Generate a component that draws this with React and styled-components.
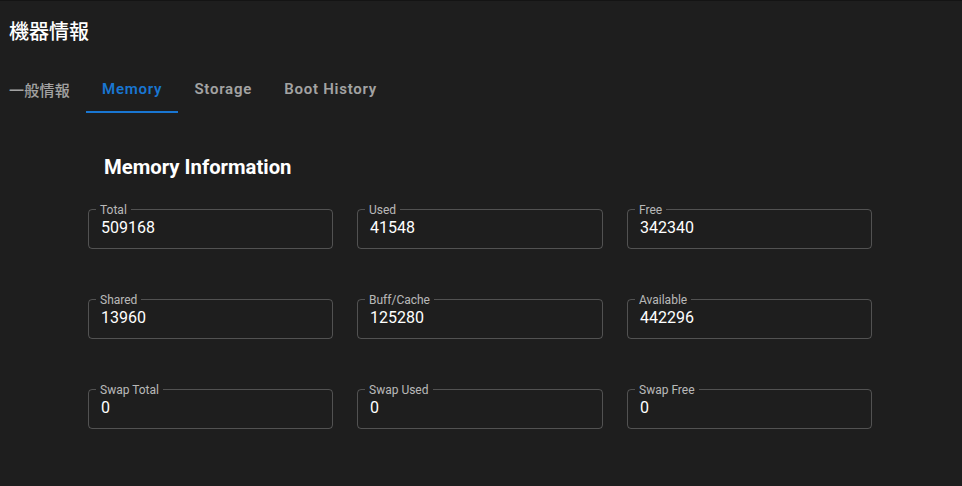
import React, { useState } from "react";
import styled, { createGlobalStyle } from "styled-components";

const GlobalStyle = createGlobalStyle`
  html, body {
    margin: 0;
    background: #1e1e1e;
  }
  body {
    font-family: Roboto, "Noto Sans CJK JP", sans-serif;
    color: #fff;
  }
  * {
    box-sizing: border-box;
  }
`;

const tabs = ["一般情報", "Memory", "Storage", "Boot History"];

const memory = [
  { label: "Total", value: "509168" },
  { label: "Used", value: "41548" },
  { label: "Free", value: "342340" },
  { label: "Shared", value: "13960" },
  { label: "Buff/Cache", value: "125280" },
  { label: "Available", value: "442296" },
  { label: "Swap Total", value: "0" },
  { label: "Swap Used", value: "0" },
  { label: "Swap Free", value: "0" },
];

const isCjk = (s) => /[^\x00-\x7f]/.test(s);

const App = () => {
  const [active, setActive] = useState(1);

  return (
    <Page>
      <GlobalStyle />
      <Header>
        <Title>機器情報</Title>
        <TabList>
          {tabs.map((t, i) => (
            <Tab
              key={t}
              $active={i === active}
              $cjk={isCjk(t)}
              onClick={() => setActive(i)}
            >
              {t}
            </Tab>
          ))}
        </TabList>
      </Header>
      <Panel>
        <SectionTitle>Memory Information</SectionTitle>
        <Grid>
          {memory.map((m) => (
            <Field key={m.label}>
              <FieldLabel>{m.label}</FieldLabel>
              <FieldValue>{m.value}</FieldValue>
            </Field>
          ))}
        </Grid>
      </Panel>
    </Page>
  );
};

export default App;

// Styled Components

const Page = styled.div`
  min-height: 100vh;
  border-top: 1px solid #141414;
  background: #1e1e1e;
`;

const Header = styled.div`
  padding: 15px 9px 0;
`;

const Title = styled.h1`
  margin: 0;
  font-size: 20px;
  line-height: 32px;
  font-weight: 500;
  color: #fff;
`;

const TabList = styled.div`
  display: flex;
  height: 48px;
  margin-top: 17px;
  margin-left: -16px;
`;

const Tab = styled.button`
  min-width: 90px;
  height: 48px;
  padding: 2px 16px 0;
  border: none;
  border-bottom: 2px solid ${(p) => (p.$active ? "#1976d2" : "transparent")};
  background: transparent;
  font-family: Roboto, "Noto Sans CJK JP", sans-serif;
  font-size: 15px;
  font-weight: ${(p) => (p.$cjk ? 500 : 600)};
  letter-spacing: ${(p) => (p.$cjk ? "0.25px" : "0.75px")};
  color: ${(p) => (p.$active ? "#1976d2" : "rgba(255, 255, 255, 0.6)")};
  cursor: pointer;
`;

const Panel = styled.div`
  padding: 42px 0 0 88px;
`;

const SectionTitle = styled.h2`
  margin: 0 0 30px 16px;
  font-size: 20.3px;
  line-height: 24px;
  font-weight: 700;
  color: #fff;
`;

const Grid = styled.div`
  display: grid;
  grid-template-columns: 245px 246px 245px;
  column-gap: 24px;
  row-gap: 50px;
`;

const Field = styled.div`
  position: relative;
  height: 40px;
  display: flex;
  align-items: center;
  padding: 0 12px 2px;
  border: 1px solid rgba(255, 255, 255, 0.23);
  border-radius: 4px;
`;

const FieldLabel = styled.span`
  position: absolute;
  top: -8px;
  left: 7px;
  padding: 0 4px;
  font-size: 12px;
  line-height: 16px;
  color: rgba(255, 255, 255, 0.7);
  background: #1e1e1e;
`;

const FieldValue = styled.span`
  font-size: 16px;
  line-height: 20px;
  color: #fff;
`;
